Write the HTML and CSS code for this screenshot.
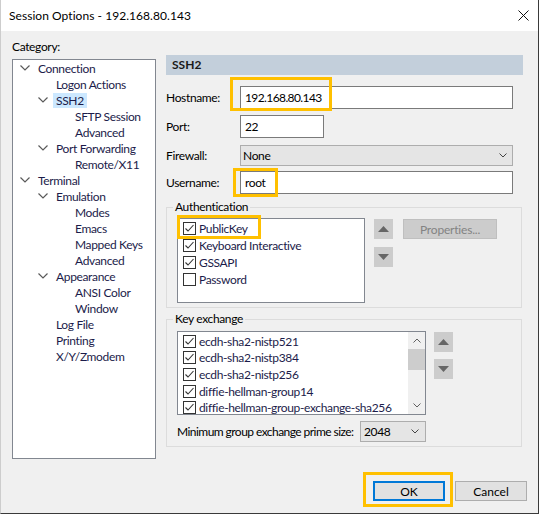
FILE: index.html
```html
<!DOCTYPE html>
<html lang="en">
<head>
    <meta charset="UTF-8">
    <meta name="viewport" content="width=device-width, initial-scale=1.0">
    <title>Session Options</title>
    <link rel="stylesheet" href="styles.css">
</head>
<body>

<div class="window">
    <div class="titlebar">
        <span class="title">Session Options - 192.168.80.143</span>
        <svg class="close" width="11" height="11" viewBox="0 0 11 11"><path d="M0.5 0.5L10.5 10.5M10.5 0.5L0.5 10.5"/></svg>
    </div>

    <div class="content">
        <!-- Category tree -->
        <div class="left">
            <div class="category">Category:</div>
            <ul class="tree">
                <li class="lvl1"><span class="toggle"><svg class="chev" viewBox="0 0 10 6"><path d="M0.5 0.5L5 5L9.5 0.5"/></svg></span><span class="node">Connection</span></li>
                <li class="lvl2"><span class="toggle"></span><span class="node">Logon Actions</span></li>
                <li class="lvl2"><span class="toggle"><svg class="chev" viewBox="0 0 10 6"><path d="M0.5 0.5L5 5L9.5 0.5"/></svg></span><span class="node selected">SSH2</span></li>
                <li class="lvl3"><span class="toggle"></span><span class="node">SFTP Session</span></li>
                <li class="lvl3"><span class="toggle"></span><span class="node">Advanced</span></li>
                <li class="lvl2"><span class="toggle"><svg class="chev" viewBox="0 0 10 6"><path d="M0.5 0.5L5 5L9.5 0.5"/></svg></span><span class="node">Port Forwarding</span></li>
                <li class="lvl3"><span class="toggle"></span><span class="node">Remote/X11</span></li>
                <li class="lvl1"><span class="toggle"><svg class="chev" viewBox="0 0 10 6"><path d="M0.5 0.5L5 5L9.5 0.5"/></svg></span><span class="node">Terminal</span></li>
                <li class="lvl2"><span class="toggle"><svg class="chev" viewBox="0 0 10 6"><path d="M0.5 0.5L5 5L9.5 0.5"/></svg></span><span class="node">Emulation</span></li>
                <li class="lvl3"><span class="toggle"></span><span class="node">Modes</span></li>
                <li class="lvl3"><span class="toggle"></span><span class="node">Emacs</span></li>
                <li class="lvl3"><span class="toggle"></span><span class="node">Mapped Keys</span></li>
                <li class="lvl3"><span class="toggle"></span><span class="node">Advanced</span></li>
                <li class="lvl2"><span class="toggle"><svg class="chev" viewBox="0 0 10 6"><path d="M0.5 0.5L5 5L9.5 0.5"/></svg></span><span class="node">Appearance</span></li>
                <li class="lvl3"><span class="toggle"></span><span class="node">ANSI Color</span></li>
                <li class="lvl3"><span class="toggle"></span><span class="node">Window</span></li>
                <li class="lvl2"><span class="toggle"></span><span class="node">Log File</span></li>
                <li class="lvl2"><span class="toggle"></span><span class="node">Printing</span></li>
                <li class="lvl2"><span class="toggle"></span><span class="node">X/Y/Zmodem</span></li>
            </ul>
        </div>

        <!-- SSH2 page -->
        <div class="right">
            <div class="section-head">SSH2</div>

            <div class="field host">
                <span class="field-label">Hostname:</span>
                <div class="textbox wide digits">192.168.80.143</div>
            </div>
            <div class="field port">
                <span class="field-label">Port:</span>
                <div class="textbox narrow">22</div>
            </div>
            <div class="field firewall">
                <span class="field-label">Firewall:</span>
                <div class="combo wide">
                    <span>None</span>
                    <svg class="combo-arrow" viewBox="0 0 8 5"><path d="M0.5 0.5L4 4L7.5 0.5"/></svg>
                </div>
            </div>
            <div class="field user">
                <span class="field-label">Username:</span>
                <div class="textbox wide">root</div>
            </div>

            <fieldset class="group auth">
                <legend>Authentication</legend>
                <div class="group-row">
                    <ul class="checklist auth-list">
                        <li><span class="check on"><svg viewBox="0 0 11 11"><path d="M1.5 5.5L4 8L9.5 2"/></svg></span>PublicKey</li>
                        <li><span class="check on"><svg viewBox="0 0 11 11"><path d="M1.5 5.5L4 8L9.5 2"/></svg></span>Keyboard Interactive</li>
                        <li><span class="check on"><svg viewBox="0 0 11 11"><path d="M1.5 5.5L4 8L9.5 2"/></svg></span>GSSAPI</li>
                        <li><span class="check"></span>Password</li>
                    </ul>
                    <div class="movers">
                        <div class="mover"><svg viewBox="0 0 11 6"><polygon points="5.5,0 11,6 0,6"/></svg></div>
                        <div class="mover"><svg viewBox="0 0 11 6"><polygon points="0,0 11,0 5.5,6"/></svg></div>
                    </div>
                    <button class="props" disabled>Properties...</button>
                </div>
            </fieldset>

            <fieldset class="group kex">
                <legend>Key exchange</legend>
                <div class="group-row">
                    <div class="kex-list">
                        <ul class="checklist">
                            <li><span class="check on"><svg viewBox="0 0 11 11"><path d="M1.5 5.5L4 8L9.5 2"/></svg></span>ecdh-sha2-nistp521</li>
                            <li><span class="check on"><svg viewBox="0 0 11 11"><path d="M1.5 5.5L4 8L9.5 2"/></svg></span>ecdh-sha2-nistp384</li>
                            <li><span class="check on"><svg viewBox="0 0 11 11"><path d="M1.5 5.5L4 8L9.5 2"/></svg></span>ecdh-sha2-nistp256</li>
                            <li><span class="check on"><svg viewBox="0 0 11 11"><path d="M1.5 5.5L4 8L9.5 2"/></svg></span>diffie-hellman-group14</li>
                            <li><span class="check on"><svg viewBox="0 0 11 11"><path d="M1.5 5.5L4 8L9.5 2"/></svg></span>diffie-hellman-group-exchange-sha256</li>
                        </ul>
                        <div class="scrollbar">
                            <svg class="sb-arrow" viewBox="0 0 8 5"><path d="M0.5 4.5L4 1L7.5 4.5"/></svg>
                            <div class="sb-thumb"></div>
                            <div class="sb-track"></div>
                            <svg class="sb-arrow" viewBox="0 0 8 5"><path d="M0.5 0.5L4 4L7.5 0.5"/></svg>
                        </div>
                    </div>
                    <div class="movers kex-movers">
                        <div class="mover"><svg viewBox="0 0 11 6"><polygon points="5.5,0 11,6 0,6"/></svg></div>
                        <div class="mover"><svg viewBox="0 0 11 6"><polygon points="0,0 11,0 5.5,6"/></svg></div>
                    </div>
                </div>
                <div class="prime-row">
                    <span class="prime-label">Minimum group exchange prime size:</span>
                    <div class="combo prime">
                        <span>2048</span>
                        <svg class="combo-arrow" viewBox="0 0 8 5"><path d="M0.5 0.5L4 4L7.5 0.5"/></svg>
                    </div>
                </div>
            </fieldset>
        </div>
    </div>

    <div class="footer">
        <button class="btn default">OK</button>
        <button class="btn">Cancel</button>
    </div>

    <!-- yellow annotation frames -->
    <div class="mark mark-host"></div>
    <div class="mark mark-user"></div>
    <div class="mark mark-pubkey"></div>
    <div class="mark mark-ok"></div>
</div>

</body>
</html>
```

FILE: styles.css
```css
body {
    margin: 0;
    background-color: #ffffff;
    font-family: 'Lato', 'Liberation Sans', sans-serif;
    font-size: 12px;
    letter-spacing: -0.35px;
    color: #000000;
}

.window {
    position: relative;
    width: 539px;
    height: 514px;
    box-sizing: border-box;
    background-color: #f0f0f0;
    border-left: 1px solid #cdcdcd;
    border-right: 1px solid #3a3a3a;
    border-bottom: 1px solid #3a3a3a;
}

/* Title bar */
.titlebar {
    height: 31px;
    background-color: #ffffff;
    display: flex;
    align-items: center;
    justify-content: space-between;
    padding: 0 9px 0 8px;
}

.title {
    font-size: 12px;
    letter-spacing: 0.05px;
    color: #000000;
    padding-bottom: 1px;
}

.close {
    width: 11px;
    height: 11px;
    margin-bottom: 1px;
}

.close path {
    stroke: #111111;
    stroke-width: 1;
    fill: none;
}

.content {
    display: flex;
    height: 428px;
    padding-left: 11px;
}

/* Category tree */
.left {
    width: 144px;
}

.category {
    height: 28px;
    line-height: 28px;
    padding-top: 2px;
    box-sizing: border-box;
}

.tree {
    list-style: none;
    margin: 0;
    padding: 0;
    height: 400px;
    box-sizing: border-box;
    background-color: #ffffff;
    border: 1px solid #828790;
}

.tree li {
    display: flex;
    align-items: center;
    height: 16px;
    color: #1c1c4a;
}

.tree .lvl1 { padding-left: 6px; }
.tree .lvl2 { padding-left: 24px; }
.tree .lvl3 { padding-left: 43px; }

.toggle {
    width: 19px;
    flex: none;
    display: flex;
    align-items: center;
}

.chev {
    width: 10px;
    height: 6px;
    margin-left: 1px;
}

.chev path {
    stroke: #5a5a5a;
    stroke-width: 1.2;
    fill: none;
}

.node {
    white-space: nowrap;
    line-height: 15px;
}

.node.selected {
    background-color: #cce8ff;
    padding: 0 3px;
    margin-left: -3px;
}

/* Right page */
.right {
    width: 357px;
    margin-left: 10px;
}

.section-head {
    margin-top: 24px;
    height: 20px;
    line-height: 20px;
    background-color: #c3cfdb;
    padding-left: 6px;
    font-weight: bold;
    letter-spacing: 0;
    color: #1a1a1a;
}

.field {
    display: flex;
    align-items: center;
    height: 23px;
}

.field.host { margin-top: 11px; }
.field.port { margin-top: 6px; }
.field.firewall { margin-top: 7px; height: 21px; }
.field.user { margin-top: 5px; }

.field-label {
    width: 74px;
    flex: none;
}

.textbox {
    height: 23px;
    line-height: 21px;
    box-sizing: border-box;
    border: 1px solid #7a7a7a;
    background-color: #ffffff;
    padding-left: 4px;
}

.textbox.digits {
    letter-spacing: -0.6px;
}

.wide { width: 273px; }
.narrow { width: 84px; }

.combo {
    height: 21px;
    box-sizing: border-box;
    border: 1px solid #adadad;
    background-color: #e5e5e5;
    padding: 0 5px 0 2px;
    display: flex;
    align-items: center;
    justify-content: space-between;
}

.combo-arrow {
    width: 8px;
    height: 5px;
}

.combo-arrow path {
    stroke: #444444;
    stroke-width: 1;
    fill: none;
}

/* Group boxes */
.group {
    width: 356px;
    box-sizing: border-box;
    margin: 0;
    border: 1px solid #dcdcdc;
    padding: 3px 0 4px 10px;
}

.group legend {
    line-height: 16px;
    padding: 0 2px;
    margin-left: -4px;
}

.auth { margin-top: 5px; }
.kex { margin-top: 3px; padding-top: 4px; }

.group-row {
    display: flex;
    align-items: flex-start;
}

.checklist {
    list-style: none;
    margin: 0;
}

.checklist li {
    display: flex;
    align-items: center;
    height: 17px;
    white-space: nowrap;
    color: #1c1c4a;
}

.auth-list {
    width: 188px;
    height: 85px;
    box-sizing: border-box;
    border: 1px solid #828790;
    background-color: #ffffff;
    padding: 1px 0 0 5px;
}

.check {
    width: 13px;
    height: 13px;
    box-sizing: border-box;
    border: 1px solid #333333;
    background-color: #ffffff;
    margin-right: 3px;
    flex: none;
}

.check svg {
    display: block;
    width: 11px;
    height: 11px;
}

.check path {
    stroke: #333333;
    stroke-width: 1.1;
    fill: none;
}

.movers {
    display: flex;
    flex-direction: column;
    gap: 8px;
    margin-left: 9px;
    margin-top: 1px;
}

.mover {
    width: 19px;
    height: 20px;
    background-color: #cccccc;
    display: flex;
    align-items: center;
    justify-content: center;
}

.mover svg {
    width: 11px;
    height: 6px;
}

.mover polygon {
    fill: #666666;
}

.props {
    margin-left: 10px;
    margin-top: 1px;
    width: 94px;
    height: 20px;
    background-color: #cccccc;
    border: 1px solid #bfbfbf;
    color: #838383;
    font-family: inherit;
    font-size: 12px;
    letter-spacing: -0.2px;
    padding: 0;
}

/* Key exchange list */
.kex-list {
    width: 249px;
    height: 84px;
    box-sizing: border-box;
    border: 1px solid #828790;
    background-color: #ffffff;
    display: flex;
    overflow: hidden;
}

.kex-list .checklist {
    flex: 1;
    padding: 1px 0 0 5px;
    overflow: hidden;
}

.kex-list .checklist li {
    height: 16.67px;
}

.scrollbar {
    width: 17px;
    flex: none;
    background-color: #f0f0f0;
    display: flex;
    flex-direction: column;
    align-items: center;
}

.sb-arrow {
    width: 8px;
    height: 5px;
    margin: 6px 0;
}

.sb-arrow path {
    stroke: #606060;
    stroke-width: 1;
    fill: none;
}

.sb-thumb {
    width: 17px;
    height: 21px;
    background-color: #cdcdcd;
}

.sb-track {
    flex: 1;
}

.kex-movers {
    margin-left: 8px;
    gap: 7px;
}

.prime-row {
    display: flex;
    align-items: center;
    margin-top: 6px;
}

.prime-label {
    width: 183px;
    flex: none;
    white-space: nowrap;
    letter-spacing: -0.55px;
}

.combo.prime {
    width: 66px;
    padding: 0 6px 0 3px;
}

/* Dialog buttons */
.footer {
    display: flex;
    justify-content: flex-end;
    gap: 10px;
    padding: 22px 11px 0 0;
}

.btn {
    width: 72px;
    height: 20px;
    background-color: #e1e1e1;
    border: 1px solid #adadad;
    font-family: inherit;
    font-size: 12px;
    color: #000000;
    padding: 0;
}

.btn.default {
    border: 2px solid #0078d7;
}

/* Annotation frames drawn over the dialog */
.mark {
    position: absolute;
    box-sizing: border-box;
    border: 3px solid #ffc000;
}

.mark-host { left: 229px; top: 77px; width: 102px; height: 34px; }
.mark-user { left: 232px; top: 168px; width: 45px; height: 29px; }
.mark-pubkey { left: 176px; top: 215px; width: 84px; height: 24px; }
.mark-ok { left: 362px; top: 472px; width: 90px; height: 35px; }
```
